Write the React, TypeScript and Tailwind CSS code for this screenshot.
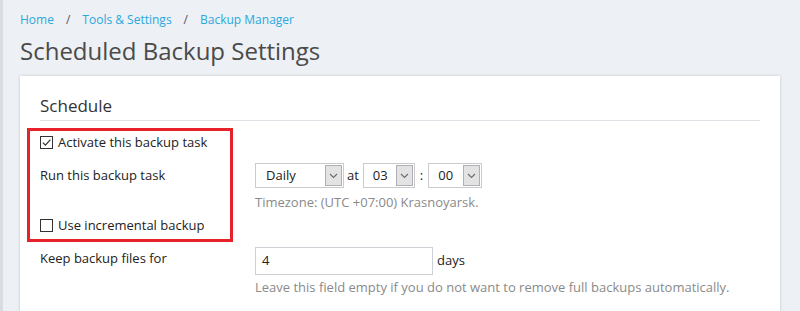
import React from "react";

function Chevron() {
  return (
    <svg width="9" height="6" viewBox="0 0 9 6" className="block">
      <path d="M1 1 L4.5 4.5 L8 1" fill="none" stroke="#6b6b6b" strokeWidth="1.1" />
    </svg>
  );
}

function Select({ value, width, textPad }: { value: string; width: string; textPad: string }) {
  return (
    <div className={`flex h-[25px] ${width} items-stretch border border-[#c9cbcf] bg-white`}>
      <div className={`flex flex-1 items-center ${textPad} text-[13px] text-[#222]`}>{value}</div>
      <div className="m-[1px] flex w-[17px] items-center justify-center border border-[#aeb0b3] bg-[#e3e3e3]">
        <Chevron />
      </div>
    </div>
  );
}

function Checkbox({ checked }: { checked?: boolean }) {
  return (
    <div className="flex h-[13px] w-[13px] items-center justify-center border border-[#333] bg-white">
      {checked && (
        <svg width="11" height="11" viewBox="0 0 11 11">
          <path d="M1.8 5.6 L4.4 8.2 L9.4 2.6" fill="none" stroke="#333" strokeWidth="1.2" />
        </svg>
      )}
    </div>
  );
}

export default function App() {
  return (
    <div
      className="h-[311px] w-[800px] overflow-hidden border-l-[3px] border-[#d9dce1] bg-[#edf0f4]"
      style={{ fontFamily: '"Open Sans", sans-serif' }}
    >
      <div className="pl-[17px] pt-[11px]">
        <div className="flex h-[18px] items-center text-[12px] text-[#28a9e0]">
          <span>Home</span>
          <span className="mx-[12px] text-[#555]">/</span>
          <span>Tools &amp; Settings</span>
          <span className="mx-[12px] text-[#555]">/</span>
          <span>Backup Manager</span>
        </div>
        <h1 className="mt-[4px] h-[36px] text-[24px] leading-[36px] text-[#4a4a4a]">Scheduled Backup Settings</h1>
      </div>
      <div className="relative ml-[17px] mt-[7px] h-[300px] w-[760px] bg-white pl-[20px] pr-[20px] pt-[18px] shadow-[0_0_3px_rgba(0,0,0,0.18)]">
        <div className="h-[27px] border-b border-[#e1e1e8] text-[17px] leading-[24px] text-[#333]">Schedule</div>

        <div className="mt-[15px] flex h-[13px] items-center gap-[5px] text-[13px] text-[#222]">
          <Checkbox checked />
          <span className="leading-[13px]">Activate this backup task</span>
        </div>

        <div className="mt-[14px] flex">
          <div className="w-[215px] pt-[3px] text-[13px] leading-[18px] text-[#222]">Run this backup task</div>
          <div className="flex flex-col">
            <div className="flex items-center text-[13px] text-[#222]">
              <Select value="Daily" width="w-[89px]" textPad="pl-[10px]" />
              <span className="ml-[3px] mr-[4px]">at</span>
              <Select value="03" width="w-[52px]" textPad="pl-[9px]" />
              <span className="mx-[5px]">:</span>
              <Select value="00" width="w-[54px]" textPad="pl-[9px]" />
            </div>
            <div className="mt-[5px] text-[13px] leading-[18px] text-[#8a8a8a]">Timezone: (UTC +07:00) Krasnoyarsk.</div>
          </div>
        </div>

        <div className="mt-[8px] flex h-[13px] items-center gap-[5px] text-[13px] text-[#222]">
          <Checkbox />
          <span className="leading-[13px]">Use incremental backup</span>
        </div>

        <div className="mt-[15px] flex">
          <div className="w-[215px] pt-[2px] text-[13px] leading-[18px] text-[#222]">Keep backup files for</div>
          <div className="flex flex-col">
            <div className="flex items-center text-[13px] text-[#222]">
              <div className="flex h-[28px] w-[178px] items-center border border-[#cdd0d4] pl-[6px]">4</div>
              <span className="ml-[4px]">days</span>
            </div>
            <div className="mt-[3px] text-[13px] leading-[18px] text-[#8a8a8a]">
              Leave this field empty if you do not want to remove full backups automatically.
            </div>
          </div>
        </div>

        <div className="absolute left-[7px] top-[52px] h-[114px] w-[206px] border-[3px] border-[#e8222b]" />
      </div>
    </div>
  );
}
